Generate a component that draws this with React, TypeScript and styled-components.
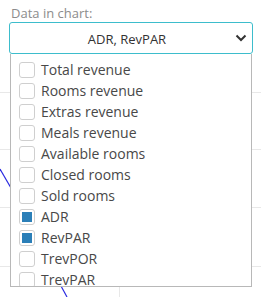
import React, { useState } from "react";
import styled, { createGlobalStyle } from "styled-components";

const GlobalStyle = createGlobalStyle`
  html, body {
    margin: 0;
    padding: 0;
    background: #ffffff;
  }
  body {
    font-family: "Open Sans", "Liberation Sans", sans-serif;
  }
`;

const Page = styled.div`
  position: relative;
  width: 261px;
  height: 297px;
  overflow: hidden;
  background: #fff;
`;

// chart that sits behind the dropdown
const ChartLayer = styled.svg`
  position: absolute;
  left: 0;
  top: 0;
`;

const Field = styled.div`
  position: relative;
  display: flex;
  flex-direction: column;
  padding: 4px 8px 0 9px;
  width: 244px;
`;

const Label = styled.label`
  font-size: 13px;
  line-height: 18px;
  color: #8c8c8c;
  padding-left: 2px;
`;

const SelectBox = styled.div`
  display: flex;
  align-items: center;
  height: 32px;
  box-sizing: border-box;
  border: 1px solid #3dbdcc;
  border-radius: 3px;
  background: #fff;
  padding: 0 5px 0 12px;
  font-size: 13px;
  color: #333;
`;

const SelectValue = styled.span`
  flex: 1;
  text-align: center;
  padding: 1px 5px 0 2px;
`;

const Menu = styled.div`
  position: absolute;
  left: 10px;
  top: 54px;
  width: 242px;
  height: 233px;
  box-sizing: border-box;
  border: 1px solid #b8b8b8;
  border-top: none;
  background: #fff;
  overflow-y: auto;
  &::-webkit-scrollbar {
    width: 4px;
  }
  &::-webkit-scrollbar-track {
    background: #fff;
  }
  &::-webkit-scrollbar-thumb {
    background: #bcbcbc;
  }
`;

const List = styled.div`
  display: flex;
  flex-direction: column;
  padding: 5px 0 4px 8px;
`;

const Row = styled.label`
  display: flex;
  align-items: center;
  gap: 6px;
  height: 21px;
  font-size: 14px;
  color: #484848;
  cursor: pointer;
`;

const Box = styled.span<{ $on: boolean }>`
  width: 16px;
  height: 16px;
  box-sizing: border-box;
  border: 1px solid #cfcfcf;
  border-radius: 3px;
  display: flex;
  align-items: center;
  justify-content: center;
  flex-shrink: 0;
  &::after {
    content: "";
    width: 10px;
    height: 10px;
    background: ${(p) => (p.$on ? "#2b7fb8" : "transparent")};
  }
`;

const options = [
  "Total revenue",
  "Rooms revenue",
  "Extras revenue",
  "Meals revenue",
  "Available rooms",
  "Closed rooms",
  "Sold rooms",
  "ADR",
  "RevPAR",
  "TrevPOR",
  "TrevPAR",
];

const App = () => {
  const [selected, setSelected] = useState<string[]>(["ADR", "RevPAR"]);

  const toggle = (name: string) => {
    setSelected((s) =>
      s.includes(name) ? s.filter((x) => x !== name) : [...s, name]
    );
  };

  return (
    <Page>
      <GlobalStyle />
      <ChartLayer width="261" height="297">
        <g stroke="#e8e8e8" strokeWidth="1">
          <line x1="0" y1="92.5" x2="261" y2="92.5" />
          <line x1="0" y1="149.5" x2="261" y2="149.5" />
          <line x1="0" y1="207.5" x2="261" y2="207.5" />
          <line x1="0" y1="266.5" x2="261" y2="266.5" />
          <line x1="119.5" y1="283" x2="119.5" y2="297" />
        </g>
        <g stroke="#2a2ae0" strokeWidth="1.2" fill="none">
          <line x1="0" y1="169" x2="11" y2="188" />
          <line x1="61" y1="286" x2="67" y2="297" />
        </g>
      </ChartLayer>
      <Field>
        <Label>Data in chart:</Label>
        <SelectBox>
          <SelectValue>{options.filter((o) => selected.includes(o)).join(", ")}</SelectValue>
          <svg width="12" height="8" viewBox="0 0 12 8">
            <path d="M1.5 1.5 L6 6 L10.5 1.5" stroke="#333" strokeWidth="2" fill="none" />
          </svg>
        </SelectBox>
      </Field>
      <Menu>
        <List>
          {options.map((o) => (
            <Row key={o} onClick={() => toggle(o)}>
              <Box $on={selected.includes(o)} />
              {o}
            </Row>
          ))}
        </List>
      </Menu>
    </Page>
  );
};

export default App;
